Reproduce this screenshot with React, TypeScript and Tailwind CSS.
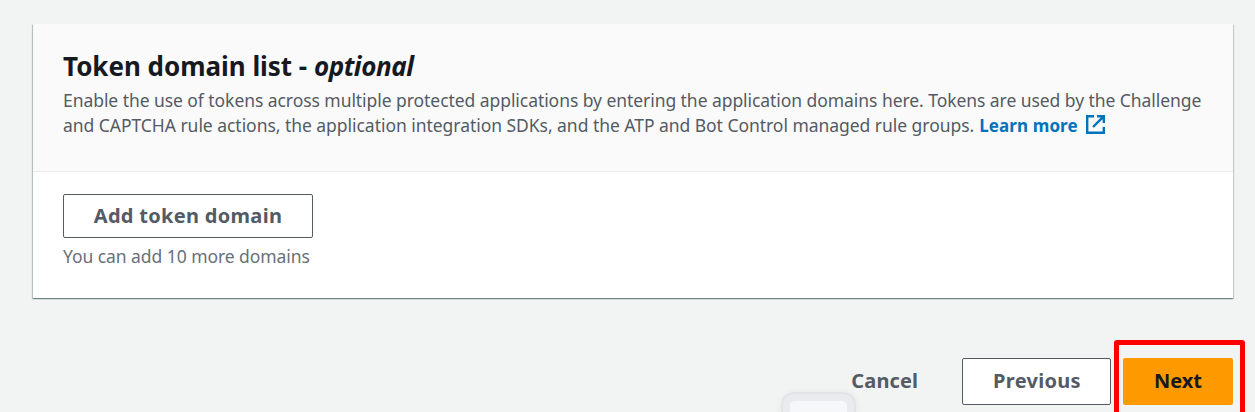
function ExternalIcon() {
  return (
    <svg className="relative -top-px ml-2 h-[19px] w-[19px]" viewBox="0 0 19 19" fill="none" stroke="#0073bb" strokeWidth="2.4">
      <path d="M8 1.2H1.2V17.8H17.8V12" />
      <path d="M11 1.2H17.8V8M17.4 1.6L7 12" />
    </svg>
  );
}

export default function App() {
  return (
    <div className="relative h-[412px] w-[1255px] overflow-hidden bg-[#f2f3f3] pt-6 pl-[33px] font-['Noto_Sans','Open_Sans',sans-serif]">
      <section className="h-[274px] w-[1200px] bg-white shadow-[0_1px_1px_0_rgba(0,28,36,0.3),1px_1px_1px_0_rgba(0,28,36,0.15),-1px_1px_1px_0_rgba(0,28,36,0.2)]">
        <header className="h-[148px] border-b border-[#eaeded] bg-[#fafafa] pt-[23px] pl-[30px]">
          <h2 className="flex h-[38px] items-center text-[26px] font-bold whitespace-pre text-[#16191f]">
            <span className="tracking-[-0.03px]">Token domain list - </span>
            <em className="tracking-[-0.45px]">optional</em>
          </h2>
          <div className="text-[17.5px] leading-[25px] whitespace-nowrap text-[#545b64]">
            <p className="mt-[3px] tracking-[-0.06px]">
              Enable the use of tokens across multiple protected applications by entering the application domains here. Tokens are used by the Challenge
            </p>
            <div className="flex items-center">
              <p className="tracking-[-0.04px]">
                and CAPTCHA rule actions, the application integration SDKs, and the ATP and Bot Control managed rule groups.
              </p>
              <a className="ml-[5px] flex items-center text-[17px] font-bold tracking-[0.1px] text-[#0073bb]" href="#">
                Learn more
                <ExternalIcon />
              </a>
            </div>
          </div>
        </header>
        <div className="pt-[22px] pl-[30px]">
          <button className="h-[44px] w-[250px] rounded-[2px] border border-[#545b64] bg-white text-[20px] font-bold tracking-[0.3px] whitespace-nowrap text-[#545b64]">
            Add token domain
          </button>
          <p className="mt-[6px] text-[17.5px] leading-[25px] tracking-[-0.06px] text-[#687078]">
            You can add 10 more domains
          </p>
        </div>
      </section>
      <footer className="mt-[60px] flex h-[47px] w-[1200px] justify-end text-[20px] font-bold text-[#545b64]">
        <button className="mr-[44px] pb-[2px] tracking-[0.1px]">Cancel</button>
        <button className="mr-3 w-[149px] rounded-[2px] border border-[#545b64] bg-white pb-[2px] pl-px tracking-[0.3px]">Previous</button>
        <button className="w-[110px] rounded-[2px] bg-[#ff9900] pb-[2px] text-[#16191f]">Next</button>
      </footer>
      <div className="absolute top-[340px] left-[1114px] h-[90px] w-[131px] rounded-[3px] border-5 border-[#ff0000]" />
      <div className="absolute top-[392px] left-[781px] h-[50px] w-[75px] rounded-[13px] border-2 border-[#e2e4e5] bg-[#eaebef] p-[7px] shadow-[0_1px_8px_rgba(0,0,0,0.06)]">
        <div className="h-[40px] rounded-[5px] bg-[#f6f7f9]" />
      </div>
    </div>
  );
}
